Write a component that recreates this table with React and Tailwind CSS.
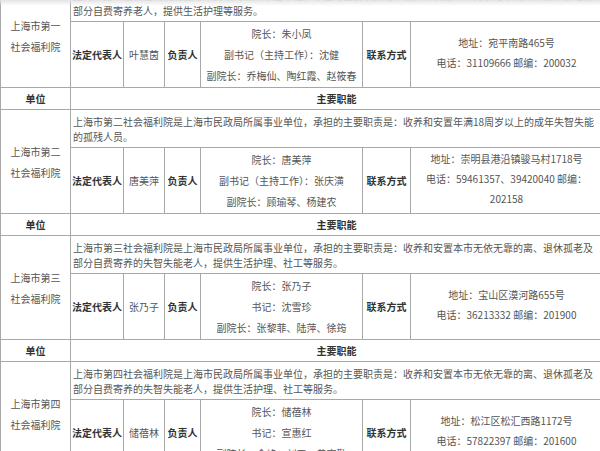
const homes = [
  {
    name: ['上海市第一', '社会福利院'],
    desc: ['上海市第一社会福利院是上海市民政局所属事业单位，承担的主要职责是：收养和安置本市无依无靠的离、退休孤老及', '部分自费寄养老人，提供生活护理等服务。'],
    rep: '叶慧茵',
    leaders: ['院长：朱小凤', '副书记（主持工作）：沈健', '副院长：乔梅仙、陶红霞、赵筱春'],
    contact: ['地址：宛平南路465号', '电话：31109666 邮编：200032'],
  },
  {
    name: ['上海市第二', '社会福利院'],
    desc: ['上海市第二社会福利院是上海市民政局所属事业单位，承担的主要职责是：收养和安置年满18周岁以上的成年失智失能', '的孤残人员。'],
    rep: '唐美萍',
    leaders: ['院长：唐美萍', '副书记（主持工作）：张庆潢', '副院长：顾瑜琴、杨建农'],
    contact: ['地址：崇明县港沿镇骏马村1718号', '电话：59461357、39420040 邮编：', '202158'],
  },
  {
    name: ['上海市第三', '社会福利院'],
    desc: ['上海市第三社会福利院是上海市民政局所属事业单位，承担的主要职责是：收养和安置本市无依无靠的离、退休孤老及', '部分自费寄养的失智失能老人，提供生活护理、社工等服务。'],
    rep: '张乃子',
    leaders: ['院长：张乃子', '书记：沈雪珍', '副院长：张黎菲、陆萍、徐筠'],
    contact: ['地址：宝山区漠河路655号', '电话：36213332 邮编：201900'],
  },
  {
    name: ['上海市第四', '社会福利院'],
    desc: ['上海市第四社会福利院是上海市民政局所属事业单位，承担的主要职责是：收养和安置本市无依无靠的离、退休孤老及', '部分自费寄养的失智失能老人，提供生活护理、社工等服务。'],
    rep: '储蓓林',
    leaders: ['院长：储蓓林', '书记：宣惠红', '副院长：俞峰、刘玉、黄宗勤'],
    contact: ['地址：松江区松汇西路1172号', '电话：57822397 邮编：201600'],
  },
]

const td = 'border border-[#a8a8a8] p-0 align-middle'

export default function App() {
  return (
    <div className="relative h-[451px] w-[600px] overflow-hidden bg-white font-['Noto_Sans_CJK_SC',sans-serif] text-[10px] text-[#555]">
      <div className="pointer-events-none absolute inset-x-0 top-0 h-[6px] bg-gradient-to-b from-[#e4e4e4] to-transparent" />
      <table className="mt-[-17px] w-[602px] table-fixed border-collapse">
        <colgroup>
          <col className="w-[70px]" />
          <col className="w-[53px]" />
          <col className="w-[41px]" />
          <col className="w-[36px]" />
          <col className="w-[162px]" />
          <col className="w-[48px]" />
          <col className="w-[192px]" />
        </colgroup>
        <tbody>
          {homes.map((h, i) => (
            <HomeRows key={i} home={h} last={i === homes.length - 1} />
          ))}
        </tbody>
      </table>
    </div>
  )
}

function HomeRows({ home, last }) {
  return (
    <>
      <tr>
        <td rowSpan={2} className={`${td} text-center leading-[21px]`}>
          <div>{home.name[0]}</div>
          <div>{home.name[1]}</div>
        </td>
        <td colSpan={6} className={`${td} h-[38px] px-[2px] leading-[15px]`}>
          {home.desc[0]}
          <br />
          {home.desc[1]}
        </td>
      </tr>
      <tr>
        <td className={`${td} h-[66px] text-center font-bold text-[#333]`}>法定代表人</td>
        <td className={`${td} text-center`}>{home.rep}</td>
        <td className={`${td} text-center font-bold text-[#333]`}>负责人</td>
        <td className={`${td} text-center leading-[21px]`}>
          {home.leaders.map((l) => (
            <div key={l}>{l}</div>
          ))}
        </td>
        <td className={`${td} text-center font-bold text-[#333]`}>联系方式</td>
        <td className={`${td} pb-[3px] text-center leading-[20px]`}>
          {home.contact.map((c) => (
            <div key={c}>{c}</div>
          ))}
        </td>
      </tr>
      {!last && (
        <tr>
          <td className={`${td} h-[22px] text-center font-bold text-[#333]`}>单位</td>
          <td colSpan={6} className={`${td} text-center font-bold text-[#333]`}>主要职能</td>
        </tr>
      )}
    </>
  )
}
